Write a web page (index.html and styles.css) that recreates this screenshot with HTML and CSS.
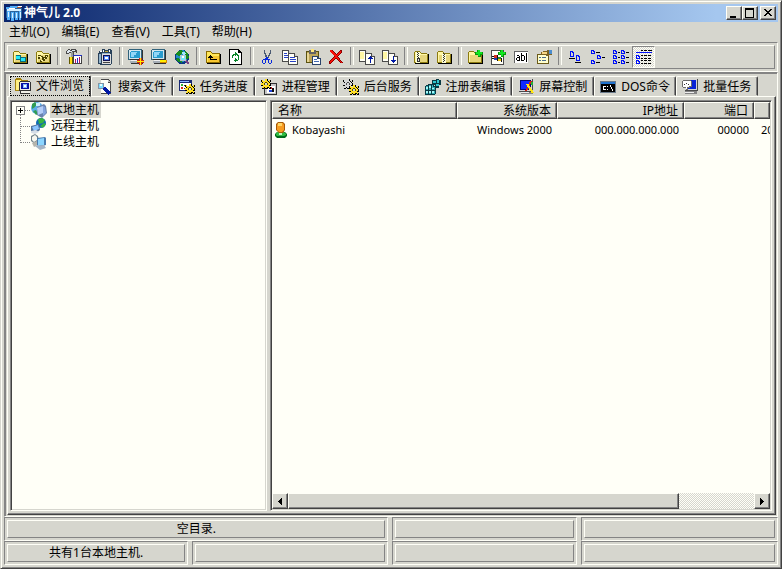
FILE: index.html
```html
<!DOCTYPE html>
<html lang="zh-CN">
<head>
<meta charset="utf-8">
<title>神气儿 2.0</title>
<link rel="stylesheet" href="styles.css">
</head>
<body>
<svg class="sprite" aria-hidden="true">
  <symbol id="folder" viewBox="0 0 16 16">
    <path fill="#8c7b10" d="M2 2h5v1h1v1h6v1h1v9H1V3h1z"/>
    <path fill="#fff7a5" d="M2 3h5v1h1v1h6v8H2z"/>
    <path fill="#e7d67b" d="M3 6h11v7H3z"/>
    <path fill="#000" d="M15 5h1v10H2v-1h13z"/>
  </symbol>
  <symbol id="page" viewBox="0 0 10 12">
    <path fill="#4a4a4a" d="M0 0h7v1h1v1h1v1h1v9H0z"/>
    <path fill="#fffff7" d="M1 1h5v3h3v7H1z"/>
    <path fill="#c6c6c6" d="M7 1h1v1h1v1H7z"/>
  </symbol>
  <symbol id="pc" viewBox="0 0 16 16">
    <path fill="#31637b" d="M1 0h13v11H0V1h1z"/>
    <path fill="#d6e7ef" d="M1 1h12v9H1z"/>
    <path fill="#299cce" d="M3 2h9v7H2V3h1z"/>
    <path fill="#94d6f7" d="M3 3h6v1H8v2H6v2H3z"/>
    <path fill="#333" d="M14 1h1v10H2v-1h12zM12 12h3v3H3v-1h9z"/>
    <path fill="#a5adb5" d="M2 12h11v2H2z"/>
    <path fill="#efefef" d="M3 11h9v1H3z"/>
    <path fill="#111" d="M9 13h4v1H9z"/>
  </symbol>
  <symbol id="gear" viewBox="0 0 10 10">
    <path fill="#000" d="M4 0h3v2h1V1h2v2H9v1h1v3H9v1h1v2H8V9H7v1H4V9H3v1H1V8h1V7H0V4h1V3H0V1h2v1h2z"/>
    <path fill="#ffde21" d="M4 0h2v2h1v1h1V1h1v2H8v1h1v2H8v1h1v2H8V8H6v1H4V8H3v1H1V8h1V6H0V4h2V3H1V1h1v1h2z"/>
    <path fill="#5a5200" d="M4 3h2v1H4zM3 4h1v2H3zM6 4h1v2H6z"/>
    <path fill="#d6d6ce" d="M4 4h2v2H4z"/>
  </symbol>
  <symbol id="globe" viewBox="0 0 16 16">
    <circle cx="8" cy="8" r="7" fill="#083984"/>
    <circle cx="8" cy="7" r="6" fill="#218cc6"/>
    <path fill="#188c21" d="M3 3l4-2 2 1-1 3-3 2-3-1zM11 2l3 3 1 4-3 1-2-3zM3 9l4 1 1 4-3-1-3-2z"/>
    <path fill="#a5e7ff" d="M8 3h3l1 2-2 1-2-1z"/>
  </symbol>
  <symbol id="i-open" viewBox="0 0 16 16">
    <use href="#folder"/>
    <path fill="#086b7b" d="M4 6h5v5H4zM8 8h6v5H8z"/><path fill="#21e7f7" d="M4 7h4v3H4zM9 9h4v3H9z"/>
  </symbol>
  <symbol id="i-tools-folder" viewBox="0 0 16 16">
    <use href="#folder"/>
    <path fill="#4a4200" d="M3 6h3v1h2v1h2V6h3v2h-1v2h-2v2H7v1H5v-2h2V9H5v1H3V8h1z"/><path fill="#fff7a5" d="M4 7h2v1h1v1H5V8H4zM11 7h1v1h-2v2H9V9h1V8h1zM6 11h2v1H6z"/>
  </symbol>
  <symbol id="i-hammer" viewBox="0 0 16 16">
    <path fill="#4a4a4a" d="M0 2h1V1h1V0h2v1h1V0h5v1h1v3h-1V3H8v3H5V4H3v1H0z"/>
    <path fill="#dee7ef" d="M1 2h1V1h2v1h5V1H6v2H3v1H1z"/>
    <path fill="#949c9c" d="M5 3h2v5H5z"/>
    <path fill="#635a00" d="M3 8h5v7H3z"/><path fill="#ffde10" d="M4 8h2v7H4z"/>
    <path fill="#424242" d="M7 6h9v9H7z"/><path fill="#fff" d="M8 7h7v7H8z"/>
    <path fill="#b51063" d="M9 10h1v4H9zM13 8h1v6h-1z"/><path fill="#2131c6" d="M11 9h1v5h-1zM7 6h9v1H7z"/>
  </symbol>
  <symbol id="i-machine" viewBox="0 0 16 16">
    <path fill="#29425a" d="M2 2h3V0h3v1h3V0h3v1h1v14h-1v1H3v-1H1V4h1z"/>
    <path fill="#94b5ce" d="M2 5h2v9H2zM5 4h8v8H5z"/>
    <path fill="#fff" d="M3 2h2v1H3zM6 1h1v2H6zM12 1h1v2h-1z"/><path fill="#bda539" d="M8 2h3v1H8z"/>
    <path fill="#dedede" d="M5 5h9v10H5z"/><path fill="#101052" d="M6 6h7v6H6z"/>
    <path fill="#4a84f7" d="M7 7h5v4H7z"/><path fill="#fff" d="M8 8h3v2H8z"/><path fill="#444" d="M6 13h7v1H6z"/>
  </symbol>
  <symbol id="i-pc-add" viewBox="0 0 16 16">
    <use href="#pc"/><path fill="#d62910" d="M11 9h3v2h2v3h-2v2h-3v-2H9v-3h2z"/><path fill="#ffef00" d="M12 9h1v3h3v1h-3v3h-1v-3H9v-1h3z"/>
  </symbol>
  <symbol id="i-pc-del" viewBox="0 0 16 16">
    <use href="#pc"/><path fill="#d68400" d="M9 11h7v3H9z"/><path fill="#ffef00" d="M9 11h6v2H9z"/>
  </symbol>
  <symbol id="i-globe-find" viewBox="0 0 16 16">
    <use href="#globe"/><circle cx="9" cy="9" r="3" fill="#73e7ff" stroke="#b5c6ce"/>
    <path fill="#fff" d="M8 7h2v2H8z"/><path stroke="#7b4284" stroke-width="2" d="M12 12l3 3"/>
  </symbol>
  <symbol id="i-up" viewBox="0 0 16 16">
    <path fill="#8c6b00" d="M1 2h5v1h1v1h8v10H1z"/><path fill="#ffe75a" d="M2 3h4v1h1v1h7v8H2z"/><path fill="#f7c631" d="M3 7h11v6H3z"/>
    <path fill="#000" d="M15 5h1v10H2v-1h13zM5 6h1v1h1v1h1v1H6v1h6v1H5V9H3V8h1V7h1z"/>
  </symbol>
  <symbol id="i-refresh" viewBox="0 0 16 16">
    <path fill="#000" d="M1 0h10v1h1v1h1v1h1v13H1z"/><path fill="#fff" d="M2 1h8v3h3v11H2z"/>
    <path fill="#088429" d="M7 3h1v1h1v1h1v1h1v3h-1V7H9V6H8v1H7V6H6v1H5v2H4V6h1V5h2zM7 9h1v1h1v1h1V9h1v2h-1v1H8v1H7v-1H6v-1h1z"/>
  </symbol>
  <symbol id="i-cut" viewBox="0 0 16 16">
    <path fill="#4a5a73" d="M5 1h1v3h1v2h1v2h1V6h1V4h1V1h1v4h-1v2h-1v2H7V8H6V5H5z"/>
    <path fill="#0829de" fill-rule="evenodd" d="M7 8h2v2h2v1h2v3h-1v1h-2v-1H9v-3H7v3H6v1H4v-1H3v-3h1v-1h2V9h1zM4 11v3h2v-3zm6 0v3h2v-3z"/>
  </symbol>
  <symbol id="i-copy" viewBox="0 0 16 16">
    <use href="#page" x="0" y="1" width="10" height="12"/><use href="#page" x="6" y="4" width="10" height="12"/>
    <path fill="#2942c6" d="M2 4h3v1H2zM2 6h4v1H2zM2 8h4v1H2zM8 8h5v1H8zM8 10h6v1H8zM8 12h6v1H8z"/>
  </symbol>
  <symbol id="i-paste" viewBox="0 0 16 16">
    <path fill="#5a5210" d="M1 2h4V1h6v1h3v12H1z"/><path fill="#bda55a" d="M2 3h11v10H2z"/><path fill="#e7d694" d="M2 4h2v9H2z"/>
    <path fill="#636363" d="M4 1h7v4H4z"/><path fill="#ffe77b" d="M6 0h3v3H6z"/>
    <path fill="#29426b" d="M7 7h6v1h1v1h2v7H7z"/><path fill="#fff" d="M8 8h4v2h3v5H8z"/><path fill="#426bb5" d="M9 10h3v1H9zM9 12h5v1H9z"/>
  </symbol>
  <symbol id="i-delete" viewBox="0 0 16 16">
    <path fill="#8c0000" d="M2 1h2l4 4 5-4h1v2l-4 4 5 7h-3L8 9l-5 6H1v-2l5-6-4-4z"/><path fill="#f71008" d="M2 1h1l5 5 5-4v1L9 7l5 7h-1L8 8l-5 6H2v-1l5-6-5-4z"/>
  </symbol>
  <symbol id="i-upload" viewBox="0 0 16 16">
    <use href="#page" x="0" y="1" width="10" height="12"/><use href="#page" x="6" y="4" width="10" height="12"/>
    <path fill="#0018a5" d="M11 7h1v1h1v1h1v1h-2v4h-1v-4H9V9h1V8h1z"/><path fill="#fff7a5" d="M1 3h4v7H1z"/>
  </symbol>
  <symbol id="i-download" viewBox="0 0 16 16">
    <use href="#page" x="0" y="1" width="10" height="12"/><use href="#page" x="6" y="4" width="10" height="12"/>
    <path fill="#0018a5" d="M11 7h1v4h2v1h-1v1h-1v1h-1v-1h-1v-1H9v-1h2z"/><path fill="#fff7a5" d="M1 3h4v7H1z"/>
  </symbol>
  <symbol id="i-zip" viewBox="0 0 16 16">
    <use href="#folder"/><path fill="#ffffd6" d="M3 3h4v11H3z"/><path fill="#333" d="M4 3h1v1H4zM5 4h1v1H5zM4 5h1v1H4zM5 6h1v1H5zM4 7h1v1H4zM5 8h1v1H5zM4 9h3v4H4z"/><path fill="#ddd" d="M5 10h1v2H5z"/>
  </symbol>
  <symbol id="i-unzip" viewBox="0 0 16 16">
    <use href="#folder"/><path fill="#ffffd6" d="M6 5h4v9H6z"/><path fill="#333" d="M7 4h1v1H7zM8 5h1v1H8zM7 6h1v1H7zM8 7h1v1H8zM7 8h1v1H7zM8 9h1v1H8zM7 10h1v1H7zM8 11h1v1H8zM7 12h1v1H7z"/>
  </symbol>
  <symbol id="i-newfolder" viewBox="0 0 16 16">
    <use href="#folder"/><path fill="#089408" d="M10 1h3v2h3v3h-2v2h-3V6H8V3h2z"/><path fill="#10e721" d="M11 1h2v2h2v2h-2v2h-2V5H9V3h2z"/>
  </symbol>
  <symbol id="i-newfile" viewBox="0 0 16 16">
    <path fill="#4a4a4a" d="M1 1h13v15H1z"/><path fill="#fffff7" d="M2 2h11v13H2z"/>
    <path fill="#d63121" d="M4 6h3v3H4z"/><path fill="#2142b5" d="M4 9h3v2H4z"/><path fill="#218c31" d="M8 8h3v2H8z"/><path fill="#f7c610" d="M8 10h3v2H8z"/><path fill="#111" d="M7 6h1v6H7zM2 7h2v1H2zM2 9h2v1H2zM11 9h1v4h-1z"/>
    <path fill="#089408" d="M10 1h3v2h3v3h-2v2h-3V6H8V3h2z"/><path fill="#10e721" d="M11 1h2v2h2v2h-2v2h-2V5H9V3h2z"/>
  </symbol>
  <symbol id="i-rename" viewBox="0 0 16 16">
    <path fill="#636363" d="M1 2h14v12H1z"/><path fill="#fff" d="M2 3h13v11H2z"/>
    <path fill="#000" fill-rule="evenodd" d="M4 6h2v1h1v5H4v-1H3V9h1V8h2V7H4zm0 3v2h2V9zM8 4h1v2h2v1h1v4h-1v1H8zm1 3v4h2V7zM13 4h1v9h-1z"/>
  </symbol>
  <symbol id="i-props" viewBox="0 0 16 16">
    <path fill="#6b5a18" d="M1 5h12v10H1z"/><path fill="#ffffce" d="M2 6h10v8H2z"/><path fill="#4a6b8c" d="M3 8h2v1H3zM6 8h4v1H6zM3 11h2v1H3zM6 11h4v1H6z"/>
    <path fill="#7b6321" d="M5 3h2V2h4V1h3v1h2v4h-3v1h-3V6H5z"/><path fill="#f7d684" d="M6 3h5v2H6z"/><path fill="#4a8cce" d="M13 1h3v4h-3z"/>
  </symbol>
  <symbol id="i-large" viewBox="0 0 16 16">
    <path fill="#0010f7" fill-rule="evenodd" d="M3 2h3v1h1v5H3zm1 1v4h2V4H5V3zM9 6h3v1h1v5H9zm1 1v4h2V8h-1V7z"/>
    <path fill="#000" d="M2 9h6v1H2zM8 13h6v1H8z"/>
  </symbol>
  <symbol id="i-small" viewBox="0 0 16 16">
    <path fill="#0010f7" fill-rule="evenodd" d="M1 1h3v1h1v3H1zm1 1v2h2V3H3V2zM7 6h3v1h1v3H7zm1 1v2h2V8H9V7zM1 11h3v1h1v3H1zm1 1v2h2v-1H3v-1z"/>
    <path fill="#000" d="M6 3h4v1H6zM12 8h3v1h-3zM6 13h4v1H6z"/>
  </symbol>
  <symbol id="i-list" viewBox="0 0 16 16">
    <path fill="#0010f7" fill-rule="evenodd" d="M0 1h3v1h1v3H0zm1 1v2h2V3H2V2zM0 6h3v1h1v3H0zm1 1v2h2V8H2V7zM0 11h3v1h1v3H0zm1 1v2h2v-1H2v-1zM8 1h3v1h1v3H8zm1 1v2h2V3h-1V2zM8 6h3v1h1v3H8zm1 1v2h2V8h-1V7zM8 11h3v1h1v3H8zm1 1v2h2v-1h-1v-1z"/>
    <path fill="#000" d="M5 3h2v1H5zM13 3h3v1h-3zM5 8h2v1H5zM13 8h3v1h-3zM5 13h2v1H5zM13 13h3v1h-3z"/>
  </symbol>
  <symbol id="i-details" viewBox="0 0 16 16">
    <path fill="#0010f7" fill-rule="evenodd" d="M0 3h16v1H0zM0 6h3v1h1v3H0zm1 1v2h2V8H2V7zM0 11h3v1h1v3H0zm1 1v2h2v-1H2v-1z"/>
    <path fill="#000" d="M5 1h2v1H5zM8 1h3v1H8zM12 1h4v1h-4zM5 6h2v1H5zM8 6h3v1H8zM12 6h3v1h-3zM5 9h2v1H5zM8 9h3v1H8zM12 9h3v1h-3zM5 11h2v1H5zM8 11h3v1H8zM12 11h3v1h-3zM5 14h2v1H5zM8 14h3v1H8zM12 14h3v1h-3z"/>
  </symbol>
  <symbol id="t-files" viewBox="0 0 16 16">
    <path fill="#a58410" d="M0 1h1V0h5v1h1v1h6v11H0z"/><path fill="#ffef84" d="M1 2h5v1h6v9H1z"/>
    <path fill="#333" d="M5 3h10v1h1v9h-1v3H5v-3h-1V4h1z"/><path fill="#efefe7" d="M5 4h10v8H5zM6 13h9v2H6z"/><path fill="#0810a5" d="M6 5h8v6H6z"/><path fill="#84bdff" d="M8 6h4v4H8z"/><path fill="#fff" d="M9 7h2v2H9z"/>
  </symbol>
  <symbol id="t-search" viewBox="0 0 16 16">
    <path fill="#4a4a4a" d="M4 0h8v1h1v1h1v13H4z"/><path fill="#fffff7" d="M4 1h7v3h2v10H4z"/><path fill="#bdbdbd" d="M11 1h1v1h1v1h-2z"/>
    <circle cx="4" cy="7" r="3" fill="#7bdeff" stroke="#8494a5"/><path fill="#e7ffff" d="M3 5h2v2H3z"/>
    <path stroke="#0018a5" stroke-width="3" d="M7 9l6 6"/>
  </symbol>
  <symbol id="t-tasks" viewBox="0 0 16 16">
    <path fill="#182973" d="M0 1h13v11H0z"/><path fill="#fff" d="M1 4h11v7H1z"/><path fill="#31b531" d="M2 5h2v2H2z"/><path fill="#d62918" d="M2 8h2v2H2z"/><path fill="#333" d="M5 6h3v1H5zM5 9h2v1H5z"/><path fill="#8cb5ff" d="M1 2h9v1H1z"/>
    <use href="#gear" x="6" y="5" width="10" height="10"/>
  </symbol>
  <symbol id="t-process" viewBox="0 0 16 16">
    <path fill="#313131" d="M3 4h13v12H3z"/><path fill="#c6c6c6" d="M4 5h11v10H4z"/><path fill="#fff" d="M6 7h8v7H6z"/><path fill="#d62121" d="M8 8h3v2H8z"/><path fill="#2142d6" d="M8 11h3v2H8z"/><path fill="#111" d="M11 9h2v4h-2z"/>
    <use href="#gear" width="10" height="10"/>
  </symbol>
  <symbol id="t-services" viewBox="0 0 16 16">
    <use href="#gear" width="10" height="10" class="silver"/><use href="#gear" x="6" y="6" width="10" height="10"/>
  </symbol>
  <symbol id="t-registry" viewBox="0 0 16 16">
    <path fill="#083942" d="M1 6h2V5h4V4h2v3h2v8h-1v1H0V7h1z"/><path fill="#31adb5" d="M1 7h2V6h5v2h2v7H1z"/>
    <path fill="#a5f7f7" d="M1 8h2v2H1zM4 7h2v2H4zM7 9h2v1H7zM1 12h2v2H1zM4 12h2v2H4zM7 12h2v2H7z"/><path fill="#083942" d="M3 6h1v9H3zM6 6h1v9H6zM1 11h9v1H1z"/>
    <path fill="#083942" d="M7 1h4V0h3v1h2v5h-2v3h-4V6H7z"/><path fill="#31c6ce" d="M8 2h3v2H8zM12 1h2v3h-2zM11 5h3v2h-3z"/>
  </symbol>
  <symbol id="t-screen" viewBox="0 0 16 16">
    <path fill="#4a4a4a" d="M1 0h14v13H1z"/><path fill="#d6d6d6" d="M1 0h13v12H1z"/><path fill="#000873" d="M2 1h11v10H2z"/><path fill="#1029ff" d="M3 2h9v8H3z"/><path fill="#848484" d="M3 13h12v2H3z"/><path fill="#eee" d="M3 13h8v1H3z"/>
    <path stroke="#d62110" stroke-width="2" d="M13 2L8 12"/><path stroke="#ffe710" stroke-width="2" d="M9 5l6 9"/><path fill="#21b531" d="M13 3h2v3h-2z"/>
  </symbol>
  <symbol id="t-dos" viewBox="0 0 16 16">
    <path fill="#6b7b8c" d="M0 2h16v12H0z"/><path fill="#2173ce" d="M1 3h14v2H1z"/><path fill="#000" d="M1 5h14v8H1z"/>
    <path fill="#fff" d="M3 7h3v1H4v2h2v1H3zM7 7h1v1H7zM7 10h1v1H7zM10 6h1v2h1v2h1v2h-1v-2h-1V8h-1z"/>
  </symbol>
  <symbol id="t-batch" viewBox="0 0 16 16">
    <path fill="#4a4a4a" d="M3 0h13v12H3z"/><path fill="#d6d6d6" d="M3 0h12v11H3z"/><path fill="#0821d6" d="M5 1h9v9H5z"/><path fill="#848484" d="M3 12h12v3H3z"/><path fill="#eee" d="M3 13h9v1H3z"/>
    <path fill="#6b6b6b" d="M1 1h8v1h1v6H8v1H6v2H4V9H1V8H0V2h1z"/><path fill="#fff" d="M1 2h8v5H7v1H5v2H4V8H1z"/><path fill="#333" d="M2 5h1v1H2zM4 4h1v1H4zM6 5h1v1H6z"/>
  </symbol>
  <symbol id="n-local" viewBox="0 0 18 16">
    <circle cx="7" cy="6" r="6" fill="#5aade7"/><path fill="#319c52" d="M2 2l3-2 2 2-2 3-3 2zM3 9l3-1 2 4-2 1z"/><path fill="#cef" d="M6 1h4v3H6z"/>
    <path fill="#6b84ad" d="M7 5l7-3 2 2 1 7-5 5-5-3z"/><path fill="#b5cef7" d="M7 6l6-2v7l-5 2z"/><path fill="#84a5de" d="M13 4l2 1 1 6-3 3z"/>
  </symbol>
  <symbol id="n-remote" viewBox="0 0 18 16">
    <circle cx="11" cy="5" r="5" fill="#106bb5"/><path fill="#39b542" d="M8 1l4-1 3 2-2 3-4 1zM10 8l4-3 2 1-3 4z"/>
    <path fill="#52739c" d="M1 8l8-2 1 6-4 3-5-2z"/><path fill="#8cc6ff" d="M2 9l6-2 1 4-5 2z"/><path fill="#d6dee7" d="M1 13l5-1 3 2-4 2-4-1z"/>
  </symbol>
  <symbol id="n-online" viewBox="0 0 18 16">
    <path fill="#73848c" d="M1 2l4-2 3 2 1 5-4 3-4-3z"/><path fill="#f7f7ef" d="M2 3l3-2 2 2v3l-3 2-2-2z"/><path fill="#b5b5ad" d="M2 9l5-2 1 4-4 2z"/>
    <path fill="#4a7bad" d="M7 4l8-1 1 1v7l-7 2-2-2z"/><path fill="#8cd6ff" d="M8 5l6-1v7l-6 1z"/><path fill="#a5b5c6" d="M5 12l9-1 2 3-6 2z"/>
  </symbol>
  <symbol id="user" viewBox="0 0 16 16">
    <path fill="#006b18" d="M3 10h8l2 2v2l-2 2H3l-2-2v-2z"/><path fill="#31bd42" d="M3 10h7l2 2v1l-2 1H3l-1-1v-1z"/><path fill="#c6f7bd" d="M5 11h3v2H5z"/>
    <path fill="#a55a08" d="M4 0h5l2 2v6l-2 3H5L2 8V2z"/><path fill="#f79c21" d="M4 1h5l1 2v5l-2 2H5L3 8V3z"/><path fill="#ffd663" d="M4 1h4v3H4z"/>
  </symbol>
  <symbol id="app" viewBox="0 0 16 16">
    <path fill="#29639c" d="M0 3h16v10H0z"/>
    <path fill="#52adf7" d="M0 2h4v2H0zM4 1h9v2H4zM1 6h3v9H1zM5 7h3v9H5zM9 7h3v8H9zM13 6h2v9h-2z"/>
    <path fill="#d6efff" d="M1 4h14v2H1zM2 7h1v5H2zM6 8h1v5H6zM10 8h1v5h-1zM14 7h1v6h-1z"/>
    <path fill="#fff" d="M12 1h4v1h-4zM3 3h6v1H3z"/><path fill="#b55a31" d="M11 2h4v1h-4z"/>
  </symbol>
</svg>

<main class="window">
  <header class="titlebar">
    <svg class="icon"><use href="#app"/></svg>
    <h1 class="title">神气儿 2.0</h1>
    <div class="caption-buttons">
      <button class="caption" aria-label="最小化"><svg viewBox="0 0 12 10"><path d="M2 8h6v2H2z"/></svg></button>
      <button class="caption" aria-label="最大化"><svg viewBox="0 0 12 10"><path fill-rule="evenodd" d="M1 0h9v10H1zm1 2v7h7V2z"/></svg></button>
      <button class="caption close" aria-label="关闭"><svg viewBox="0 0 12 10"><path d="M2 1h2v1h1v1h2V2h1V1h2v1H9v1H8v1H7v1h1v1h1v1h1v1H8V7H7V6H5v1H4v1H2V7h1V6h1V5h1V4H4V3H3V2H2z"/></svg></button>
    </div>
  </header>

  <nav class="menubar">
    <button>主机(O)</button><button>编辑(E)</button><button>查看(V)</button><button>工具(T)</button><button>帮助(H)</button>
  </nav>

  <div class="toolbar-frame">
    <div class="toolbar" role="toolbar">
      <button class="tool" aria-label="打开"><svg class="icon"><use href="#i-open"/></svg></button>
      <button class="tool" aria-label="文件夹工具"><svg class="icon"><use href="#i-tools-folder"/></svg></button>
      <span class="sep"></span>
      <button class="tool" aria-label="设置"><svg class="icon"><use href="#i-hammer"/></svg></button>
      <span class="sep"></span>
      <button class="tool" aria-label="本机"><svg class="icon"><use href="#i-machine"/></svg></button>
      <span class="sep"></span>
      <button class="tool" aria-label="添加主机"><svg class="icon"><use href="#i-pc-add"/></svg></button>
      <button class="tool" aria-label="删除主机"><svg class="icon"><use href="#i-pc-del"/></svg></button>
      <button class="tool" aria-label="查找主机"><svg class="icon"><use href="#i-globe-find"/></svg></button>
      <span class="sep"></span>
      <button class="tool" aria-label="向上"><svg class="icon"><use href="#i-up"/></svg></button>
      <button class="tool" aria-label="刷新"><svg class="icon"><use href="#i-refresh"/></svg></button>
      <span class="sep"></span>
      <button class="tool" aria-label="剪切"><svg class="icon"><use href="#i-cut"/></svg></button>
      <button class="tool" aria-label="复制"><svg class="icon"><use href="#i-copy"/></svg></button>
      <button class="tool" aria-label="粘贴"><svg class="icon"><use href="#i-paste"/></svg></button>
      <button class="tool" aria-label="删除"><svg class="icon"><use href="#i-delete"/></svg></button>
      <span class="sep"></span>
      <button class="tool" aria-label="上传"><svg class="icon"><use href="#i-upload"/></svg></button>
      <button class="tool" aria-label="下载"><svg class="icon"><use href="#i-download"/></svg></button>
      <span class="sep"></span>
      <button class="tool" aria-label="压缩"><svg class="icon"><use href="#i-zip"/></svg></button>
      <button class="tool" aria-label="解压"><svg class="icon"><use href="#i-unzip"/></svg></button>
      <span class="sep"></span>
      <button class="tool" aria-label="新建文件夹"><svg class="icon"><use href="#i-newfolder"/></svg></button>
      <button class="tool" aria-label="新建文件"><svg class="icon"><use href="#i-newfile"/></svg></button>
      <button class="tool" aria-label="重命名"><svg class="icon"><use href="#i-rename"/></svg></button>
      <button class="tool" aria-label="属性"><svg class="icon"><use href="#i-props"/></svg></button>
      <span class="sep"></span>
      <button class="tool" aria-label="大图标"><svg class="icon"><use href="#i-large"/></svg></button>
      <button class="tool" aria-label="小图标"><svg class="icon"><use href="#i-small"/></svg></button>
      <button class="tool" aria-label="列表"><svg class="icon"><use href="#i-list"/></svg></button>
      <button class="tool pressed" aria-label="详细资料" aria-pressed="true"><svg class="icon"><use href="#i-details"/></svg></button>
    </div>
  </div>

  <section class="workspace">
    <div class="tabs" role="tablist">
      <button class="tab active" role="tab" aria-selected="true"><svg class="icon"><use href="#t-files"/></svg>文件浏览</button>
      <button class="tab" role="tab"><svg class="icon"><use href="#t-search"/></svg>搜索文件</button>
      <button class="tab" role="tab"><svg class="icon"><use href="#t-tasks"/></svg>任务进度</button>
      <button class="tab" role="tab"><svg class="icon"><use href="#t-process"/></svg>进程管理</button>
      <button class="tab" role="tab"><svg class="icon"><use href="#t-services"/></svg>后台服务</button>
      <button class="tab wide" role="tab"><svg class="icon"><use href="#t-registry"/></svg>注册表编辑</button>
      <button class="tab" role="tab"><svg class="icon"><use href="#t-screen"/></svg>屏幕控制</button>
      <button class="tab" role="tab"><svg class="icon"><use href="#t-dos"/></svg>DOS命令</button>
      <button class="tab" role="tab"><svg class="icon"><use href="#t-batch"/></svg>批量任务</button>
    </div>
    <div class="page">
      <ul class="tree sunken" role="tree">
        <li class="node selected" role="treeitem" aria-selected="true">
          <svg class="guide" viewBox="0 0 14 16"><path class="dots" d="M9 8.500h5M4.500 13v3"/><path class="box" d="M.5 4.500h8v8h-8z"/><path class="plus" d="M2 8.500h5M4.500 6v5"/></svg>
          <svg class="host"><use href="#n-local"/></svg><span>本地主机</span>
        </li>
        <li class="node" role="treeitem">
          <svg class="guide" viewBox="0 0 14 16"><path class="dots" d="M5 8.500h9M4.500 0v16"/></svg>
          <svg class="host"><use href="#n-remote"/></svg><span>远程主机</span>
        </li>
        <li class="node" role="treeitem">
          <svg class="guide" viewBox="0 0 14 16"><path class="dots" d="M5 8.500h9M4.500 0v9"/></svg>
          <svg class="host"><use href="#n-online"/></svg><span>上线主机</span>
        </li>
      </ul>
      <div class="list sunken">
        <div class="rows">
          <table>
            <colgroup><col class="c-name"><col class="c-sys"><col class="c-ip"><col class="c-port"><col></colgroup>
            <thead><tr><th class="left">名称</th><th>系统版本</th><th>IP地址</th><th>端口</th><th></th></tr></thead>
            <tbody><tr>
              <td class="left"><span class="name"><svg class="icon"><use href="#user"/></svg>Kobayashi</span></td>
              <td>Windows 2000</td><td>000.000.000.000</td><td>00000</td><td class="left cut">20</td>
            </tr></tbody>
          </table>
        </div>
        <div class="scrollbar">
          <button class="arrow" aria-label="向左滚动"><svg viewBox="0 0 4 7"><path d="M4 0v7H3V6H2V5H1V4H0V3h1V2h1V1h1V0z"/></svg></button>
          <div class="track"><div class="thumb"></div></div>
          <button class="arrow" aria-label="向右滚动"><svg viewBox="0 0 4 7"><path d="M0 0h1v1h1v1h1v1h1v1H3v1H2v1H1v1H0z"/></svg></button>
        </div>
      </div>
    </div>
  </section>

  <footer class="status">
    <div class="cell span"><p>空目录.</p></div>
    <div class="cell"><p></p></div>
    <div class="cell"><p></p></div>
    <div class="cell"><p>共有1台本地主机.</p></div>
    <div class="cell"><p></p></div>
    <div class="cell"><p></p></div>
    <div class="cell"><p></p></div>
  </footer>
</main>
</body>
</html>
```
FILE: styles.css
```css
:root {
  --face: #d6d6ce;
  --light: #fffff7;
  --shadow: #848484;
  --dark: #424242;
}

* { box-sizing: border-box; }

body {
  margin: 0;
  background: var(--face);
  color: #000;
  font: 12px/16px "Noto Sans", "Noto Sans CJK SC", sans-serif;
}

button {
  margin: 0;
  padding: 0;
  border: 0;
  background: none;
  color: inherit;
  font: inherit;
}

ul, p, h1 { margin: 0; padding: 0; }

svg { display: block; flex: none; shape-rendering: crispEdges; }

.sprite { position: absolute; width: 0; height: 0; }

.icon { width: 16px; height: 16px; }

.silver { filter: grayscale(1); }

.window {
  display: flex;
  flex-direction: column;
  min-height: 100vh;
  padding: 3px;
  border: 1px solid;
  border-color: var(--face) var(--dark) var(--dark) var(--face);
  box-shadow: inset 1px 1px var(--light), inset -1px -1px var(--shadow);
}

/* Title bar */
.titlebar {
  display: flex;
  align-items: center;
  height: 18px;
  padding: 0 2px;
  background: linear-gradient(90deg, #08246b, #a5c7ef 92%);
}

.title {
  flex: 1;
  padding-left: 2px;
  color: #fff;
  font-size: 12px;
  font-weight: 700;
}

.caption-buttons { display: flex; }

.caption, .arrow, .thumb {
  background: var(--face);
  border: 1px solid;
  border-color: var(--light) var(--dark) var(--dark) var(--light);
  box-shadow: inset -1px -1px var(--shadow);
}

.caption { width: 16px; height: 14px; padding: 1px; }
.caption svg { width: 12px; height: 10px; }
.close { margin-left: 2px; }

/* Menu */
.menubar {
  display: flex;
  gap: 12px;
  height: 20px;
  padding: 0 5px;
}

/* Toolbar */
.toolbar-frame {
  padding: 2px;
  border: 1px solid;
  border-color: var(--shadow) var(--light) var(--light) var(--shadow);
}

.toolbar {
  display: flex;
  border: 1px solid;
  border-color: var(--light) var(--shadow) var(--shadow) var(--light);
}

.tool {
  display: flex;
  align-items: center;
  justify-content: center;
  width: 23px;
  height: 22px;
}

.pressed {
  border: 1px solid;
  border-color: var(--shadow) var(--light) var(--light) var(--shadow);
  background: repeating-conic-gradient(#fffff7 0 25%, #d6d6ce 0 50%) 0 0 / 2px 2px;
}

.sep { width: 8px; padding: 1px 3px; }
.sep::before {
  content: "";
  display: block;
  width: 2px;
  height: 18px;
  border-left: 1px solid var(--shadow);
  border-right: 1px solid var(--light);
}

/* Tabbed workspace */
.workspace {
  display: flex;
  flex: 1;
  flex-direction: column;
  padding: 1px;
  border: 1px solid;
  border-color: var(--shadow) var(--light) var(--light) var(--shadow);
  box-shadow: inset 1px 1px var(--shadow);
}

.tabs {
  display: flex;
  align-items: flex-end;
  margin: 1px 18px 0 3px;
}

.tab {
  display: flex;
  flex: 82 1 0;
  align-items: center;
  gap: 5px;
  height: 20px;
  padding: 2px 0 0 5px;
  border: 1px solid;
  border-color: var(--light) var(--dark) transparent var(--light);
  border-radius: 2px 2px 0 0;
  box-shadow: inset -1px 0 var(--shadow);
  white-space: nowrap;
}

.wide { flex-grow: 95; }

.active {
  height: 22px;
  margin-bottom: -1px;
  padding: 0 0 1px 5px;
  background: var(--face);
  outline: 1px dotted #000;
  outline-offset: -2px;
  z-index: 1;
}

.page {
  display: flex;
  flex: 1;
  gap: 3px;
  margin: 0 0 0 1px;
  padding: 3px 3px 3px 2px;
  border: 1px solid;
  border-color: var(--light) var(--dark) var(--dark) var(--light);
  box-shadow: inset -1px -1px var(--shadow);
}

.sunken {
  padding: 2px;
  border: 1px solid;
  border-color: var(--shadow) var(--light) var(--light) var(--shadow);
  box-shadow: inset 1px 1px var(--dark), inset -1px -1px var(--face);
  background: var(--light);
}

/* Host tree */
.tree {
  flex: none;
  width: 257px;
  padding: 1px 1px 1px 5px;
  list-style: none;
}

.node { display: flex; height: 16px; }
.node span { margin-left: 2px; padding: 0 2px 0 1px; }
.selected span { background: var(--face); }
.guide { width: 14px; height: 16px; fill: none; stroke: #000; }
.guide .dots { stroke: var(--shadow); stroke-dasharray: 1 1; }
.guide .box { stroke: var(--shadow); }
.host { width: 18px; height: 16px; shape-rendering: auto; }

/* Host list */
.list {
  display: flex;
  flex: 1;
  flex-direction: column;
  min-width: 0;
  padding: 1px;
}

.rows { flex: 1; overflow: hidden; }

table {
  width: 100%;
  border-spacing: 0;
  table-layout: fixed;
}

.c-name { width: 185px; }
.c-sys { width: 100px; }
.c-ip { width: 127px; }
.c-port { width: 70px; }

th {
  height: 17px;
  padding: 0 5px;
  border: 1px solid;
  border-color: var(--light) var(--dark) var(--dark) var(--light);
  box-shadow: inset -1px -1px var(--shadow);
  background: var(--face);
  font-weight: 400;
  line-height: 15px;
  text-align: right;
}

td {
  padding: 3px 5px;
  font-size: 11px;
  text-align: right;
  white-space: nowrap;
}

th.left, td.left { text-align: left; }
td.left { padding-left: 2px; }
td.cut { padding: 3px 0 3px 7px; }
.name { display: flex; gap: 2px; }
.name svg { shape-rendering: auto; }

.scrollbar { display: flex; height: 16px; }

.arrow {
  display: flex;
  align-items: center;
  justify-content: center;
  width: 16px;
}
.arrow svg { width: 4px; height: 7px; }

.track {
  flex: 1;
  background: repeating-conic-gradient(#fffff7 0 25%, #d6d6ce 0 50%) 0 0 / 2px 2px;
}
.thumb { width: 84%; height: 100%; }

/* Status bar */
.status {
  display: grid;
  grid-template-columns: 184fr 196fr 184fr 197fr;
  column-gap: 4px;
}

.cell {
  padding: 2px;
  border: 1px solid;
  border-color: var(--shadow) var(--light) var(--light) var(--shadow);
}

.cell p {
  height: 18px;
  border: 1px solid;
  border-color: var(--light) var(--shadow) var(--shadow) var(--light);
  text-align: center;
}

.span { grid-column: span 2; }
```
